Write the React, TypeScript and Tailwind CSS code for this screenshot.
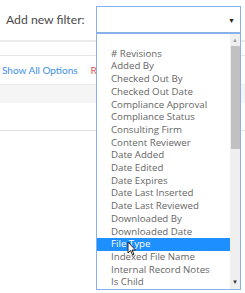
import React from 'react';

const options = [
  '',
  '# Revisions',
  'Added By',
  'Checked Out By',
  'Checked Out Date',
  'Compliance Approval',
  'Compliance Status',
  'Consulting Firm',
  'Content Reviewer',
  'Date Added',
  'Date Edited',
  'Date Expires',
  'Date Last Inserted',
  'Date Last Reviewed',
  'Downloaded By',
  'Downloaded Date',
  'File Type',
  'Indexed File Name',
  'Internal Record Notes',
  'Is Child',
];

const Cursor = () => (
  <svg width="10" height="15" viewBox="0 0 10 15" className="absolute left-[127px] top-[241px]">
    <path d="M1 1 L1 12 L3.5 9.5 L5.5 14 L7 13.3 L5 9 L8.5 9 Z" fill="#fff" stroke="#222" strokeWidth="1" strokeLinejoin="round" />
  </svg>
);

export default function App() {
  return (
    <div className="relative w-[245px] h-[293px] overflow-hidden bg-white font-['Lato',sans-serif]">
      {/* top row */}
      <div className="flex items-start h-[40px] pt-[6px]">
        <div className="pl-[6px] pt-[5px] text-[12.2px] text-[#4a4a4a] w-[90px]">Add new filter:</div>
        <div className="ml-auto mr-[4px] w-[145px] h-[27px] border border-[#88b0ea] relative">
          <span className="absolute right-[5px] top-[8px] text-[7px] text-[#222]">▼</span>
        </div>
      </div>
      <div className="h-[2px] bg-[#ebebeb]" />
      <div className="h-[13px]" />
      <div className="h-px bg-[#e6e6e6]" />
      <div className="h-[28px] flex items-center gap-[13px] pl-[2px] text-[10px]">
        <span className="text-[#3e8ee8]">Show All Options</span>
        <span className="text-[#e0564f]">Reset</span>
      </div>
      <div className="h-[19px] bg-[#f5f5f5] border-t border-[#ececec]" />
      <div className="h-[27px]" />
      <div className="h-px bg-[#e2e2e2]" />

      {/* open dropdown list */}
      <div className="absolute left-[96px] top-[33px] w-[145px] h-[257px] border border-[#88b0ea] bg-white flex">
        <div className="flex-1 flex flex-col pt-px font-['Open_Sans',sans-serif]">
          {options.map((o, i) => (
            <div
              key={i}
              className={`h-[12.72px] leading-[12.72px] pl-[14px] text-[9.7px] whitespace-nowrap overflow-hidden ${
                o === 'File Type' ? 'bg-[#1e8fff] text-white' : 'text-[#666]'
              }`}
            >
              {o}
            </div>
          ))}
        </div>
        <div className="w-[10px] bg-[#efefef] flex flex-col items-center">
          <span className="text-[6px] text-[#a0a0a0] leading-[10px] mt-px">▲</span>
          <div className="w-[9px] h-[103px] bg-[#c1c1c1] mt-[1px]" />
          <div className="flex-1" />
          <span className="text-[6px] text-[#333] leading-[10px] mb-[2px]">▼</span>
        </div>
      </div>
      <Cursor />
    </div>
  );
}
